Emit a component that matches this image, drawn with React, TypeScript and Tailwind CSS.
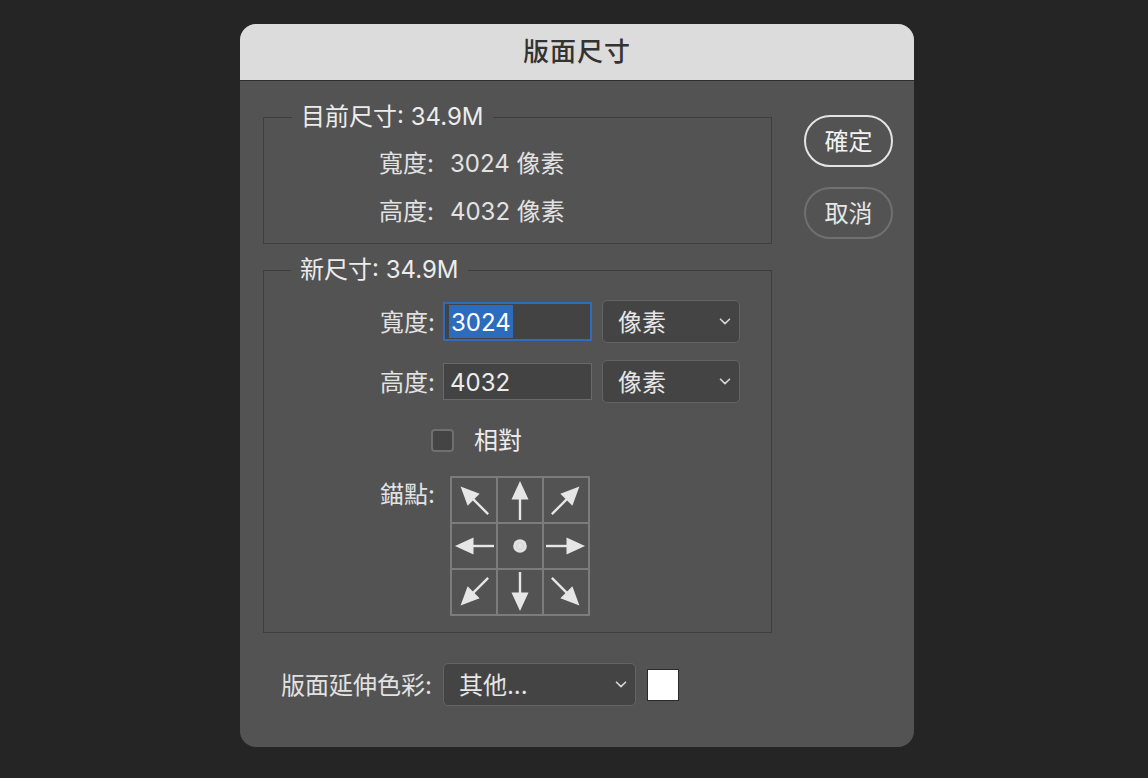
import React from "react";

function Chevron() {
  return (
    <svg width="12" height="7" viewBox="0 0 12 7" className="shrink-0">
      <path d="M1.5 1.2 L6 5.6 L10.5 1.2" fill="none" stroke="#d6d6d6" strokeWidth="1.6" strokeLinecap="round" strokeLinejoin="round" />
    </svg>
  );
}

function Arrow({ rot }: { rot: number }) {
  return (
    <svg width="44" height="44" viewBox="0 0 44 44">
      <g transform={`rotate(${rot} 22 22)`}>
        <rect x="20.8" y="19" width="2.4" height="23" fill="#e6e6e6" />
        <polygon points="22,3 13.5,21.5 30.5,21.5" fill="#e6e6e6" />
      </g>
    </svg>
  );
}

function Dot() {
  return (
    <svg width="44" height="44" viewBox="0 0 44 44">
      <circle cx="22" cy="22" r="6.8" fill="#e2e2e2" />
      <circle cx="22" cy="22" r="3.5" fill="none" stroke="#d4d4d4" strokeWidth="1" />
    </svg>
  );
}

function Select({ label, w }: { label: string; w: string }) {
  return (
    <div className={`${w} h-[43px] rounded-[5px] border border-[#646464] bg-[#444444] flex items-center justify-between pl-[15px] pr-[8px] text-[#e6e6e6]`}>
      <span className="pt-[2px]">{label}</span>
      <Chevron />
    </div>
  );
}

export default function App() {
  const cells: (number | null)[] = [-45, 0, 45, -90, null, 90, -135, 180, 135];
  return (
    <div className="min-h-[778px] w-full bg-[#252525] flex justify-center pl-[6px] pt-[24px] font-['Inter','Noto_Sans_CJK_TC',sans-serif] text-[24px] leading-[28px]">
      <div className="w-[674px] h-[723px] rounded-[16px] overflow-hidden bg-[#535353] flex flex-col">
        <div className="h-[57px] shrink-0 bg-[#dcdcdc] border-b border-[#2e2e2e] flex items-center justify-center text-[26px] font-medium text-[#333333] tracking-[1px]">
          版面尺寸
        </div>
        <div className="flex pl-[23px] pt-[22px]">
          <div className="w-[509px] flex flex-col text-[#e2e2e2]">
            <fieldset className="border border-[#3e3e3e] p-0 m-0">
              <legend className="ml-[28px] px-[9px] text-[#ececec]">目前尺寸: 34.9M</legend>
              <div className="flex flex-col gap-[20px] pl-[115px] pt-[19px] pb-[17px]">
                <div className="flex h-[28px] items-center">
                  <span>寬度:</span>
                  <span className="ml-[16px]">3024 像素</span>
                </div>
                <div className="flex h-[28px] items-center">
                  <span>高度:</span>
                  <span className="ml-[16px]">4032 像素</span>
                </div>
              </div>
            </fieldset>

            <fieldset className="mt-[12px] border border-[#3e3e3e] p-0 m-0">
              <legend className="ml-[27px] px-[9px] text-[#ececec]">新尺寸: 34.9M</legend>
              <div className="flex flex-col pl-[115px] pt-[16px] pb-[16px]">
                <div className="flex items-center h-[43px]">
                  <span className="w-[56px] text-right whitespace-nowrap pt-[2px]">寬度:</span>
                  <div className="ml-[8px] w-[149px] h-[39px] border-2 border-[#2f6cc0] bg-[#434343] flex items-stretch py-[1px] pl-[4px]">
                    <span className="bg-[#2d6cbd] text-white flex items-center px-[2px] pt-[2px]">3024</span>
                  </div>
                  <div className="ml-[10px]">
                    <Select label="像素" w="w-[138px]" />
                  </div>
                </div>
                <div className="flex items-center h-[43px] mt-[17px]">
                  <span className="w-[56px] text-right whitespace-nowrap pt-[2px]">高度:</span>
                  <div className="ml-[8px] w-[149px] h-[37px] border border-[#696969] bg-[#434343] flex items-center pl-[6px] pt-[2px] text-[#ececec]">
                    4032
                  </div>
                  <div className="ml-[10px]">
                    <Select label="像素" w="w-[138px]" />
                  </div>
                </div>
                <div className="flex items-center h-[28px] mt-[23px]">
                  <div className="ml-[52px] w-[23px] h-[23px] rounded-[4px] border-2 border-[#6f6f6f] bg-[#444444]" />
                  <span className="ml-[20px] text-[#ececec] pt-[2px]">相對</span>
                </div>
                <div className="flex items-start mt-[22px]">
                  <span className="w-[56px] text-right mt-[5px] whitespace-nowrap">錨點:</span>
                  <div className="ml-[15px] grid grid-cols-3 gap-[2px] p-[2px] bg-[#7c7c7c]">
                    {cells.map((c, i) => (
                      <div key={i} className="w-[44px] h-[44px] bg-[#535353]">
                        {c === null ? <Dot /> : <Arrow rot={c} />}
                      </div>
                    ))}
                  </div>
                </div>
              </div>
            </fieldset>

            <div className="mt-[30px] ml-[18px] flex items-center">
              <span className="whitespace-nowrap pt-[2px]">版面延伸色彩:</span>
              <div className="ml-[11px]">
                <Select label="其他..." w="w-[193px]" />
              </div>
              <div className="ml-[11px] w-[32px] h-[32px] bg-white border border-[#2a2a2a]" />
            </div>
          </div>

          <div className="ml-[32px] pt-[12px] flex flex-col gap-[20px]">
            <div className="w-[89px] h-[52px] rounded-full border-2 border-[#e4e4e4] flex items-center justify-center text-[#f2f2f2] pt-[2px]">
              確定
            </div>
            <div className="w-[89px] h-[52px] rounded-full border-2 border-[#707070] flex items-center justify-center text-[#e6e6e6] pt-[2px]">
              取消
            </div>
          </div>
        </div>
      </div>
    </div>
  );
}
